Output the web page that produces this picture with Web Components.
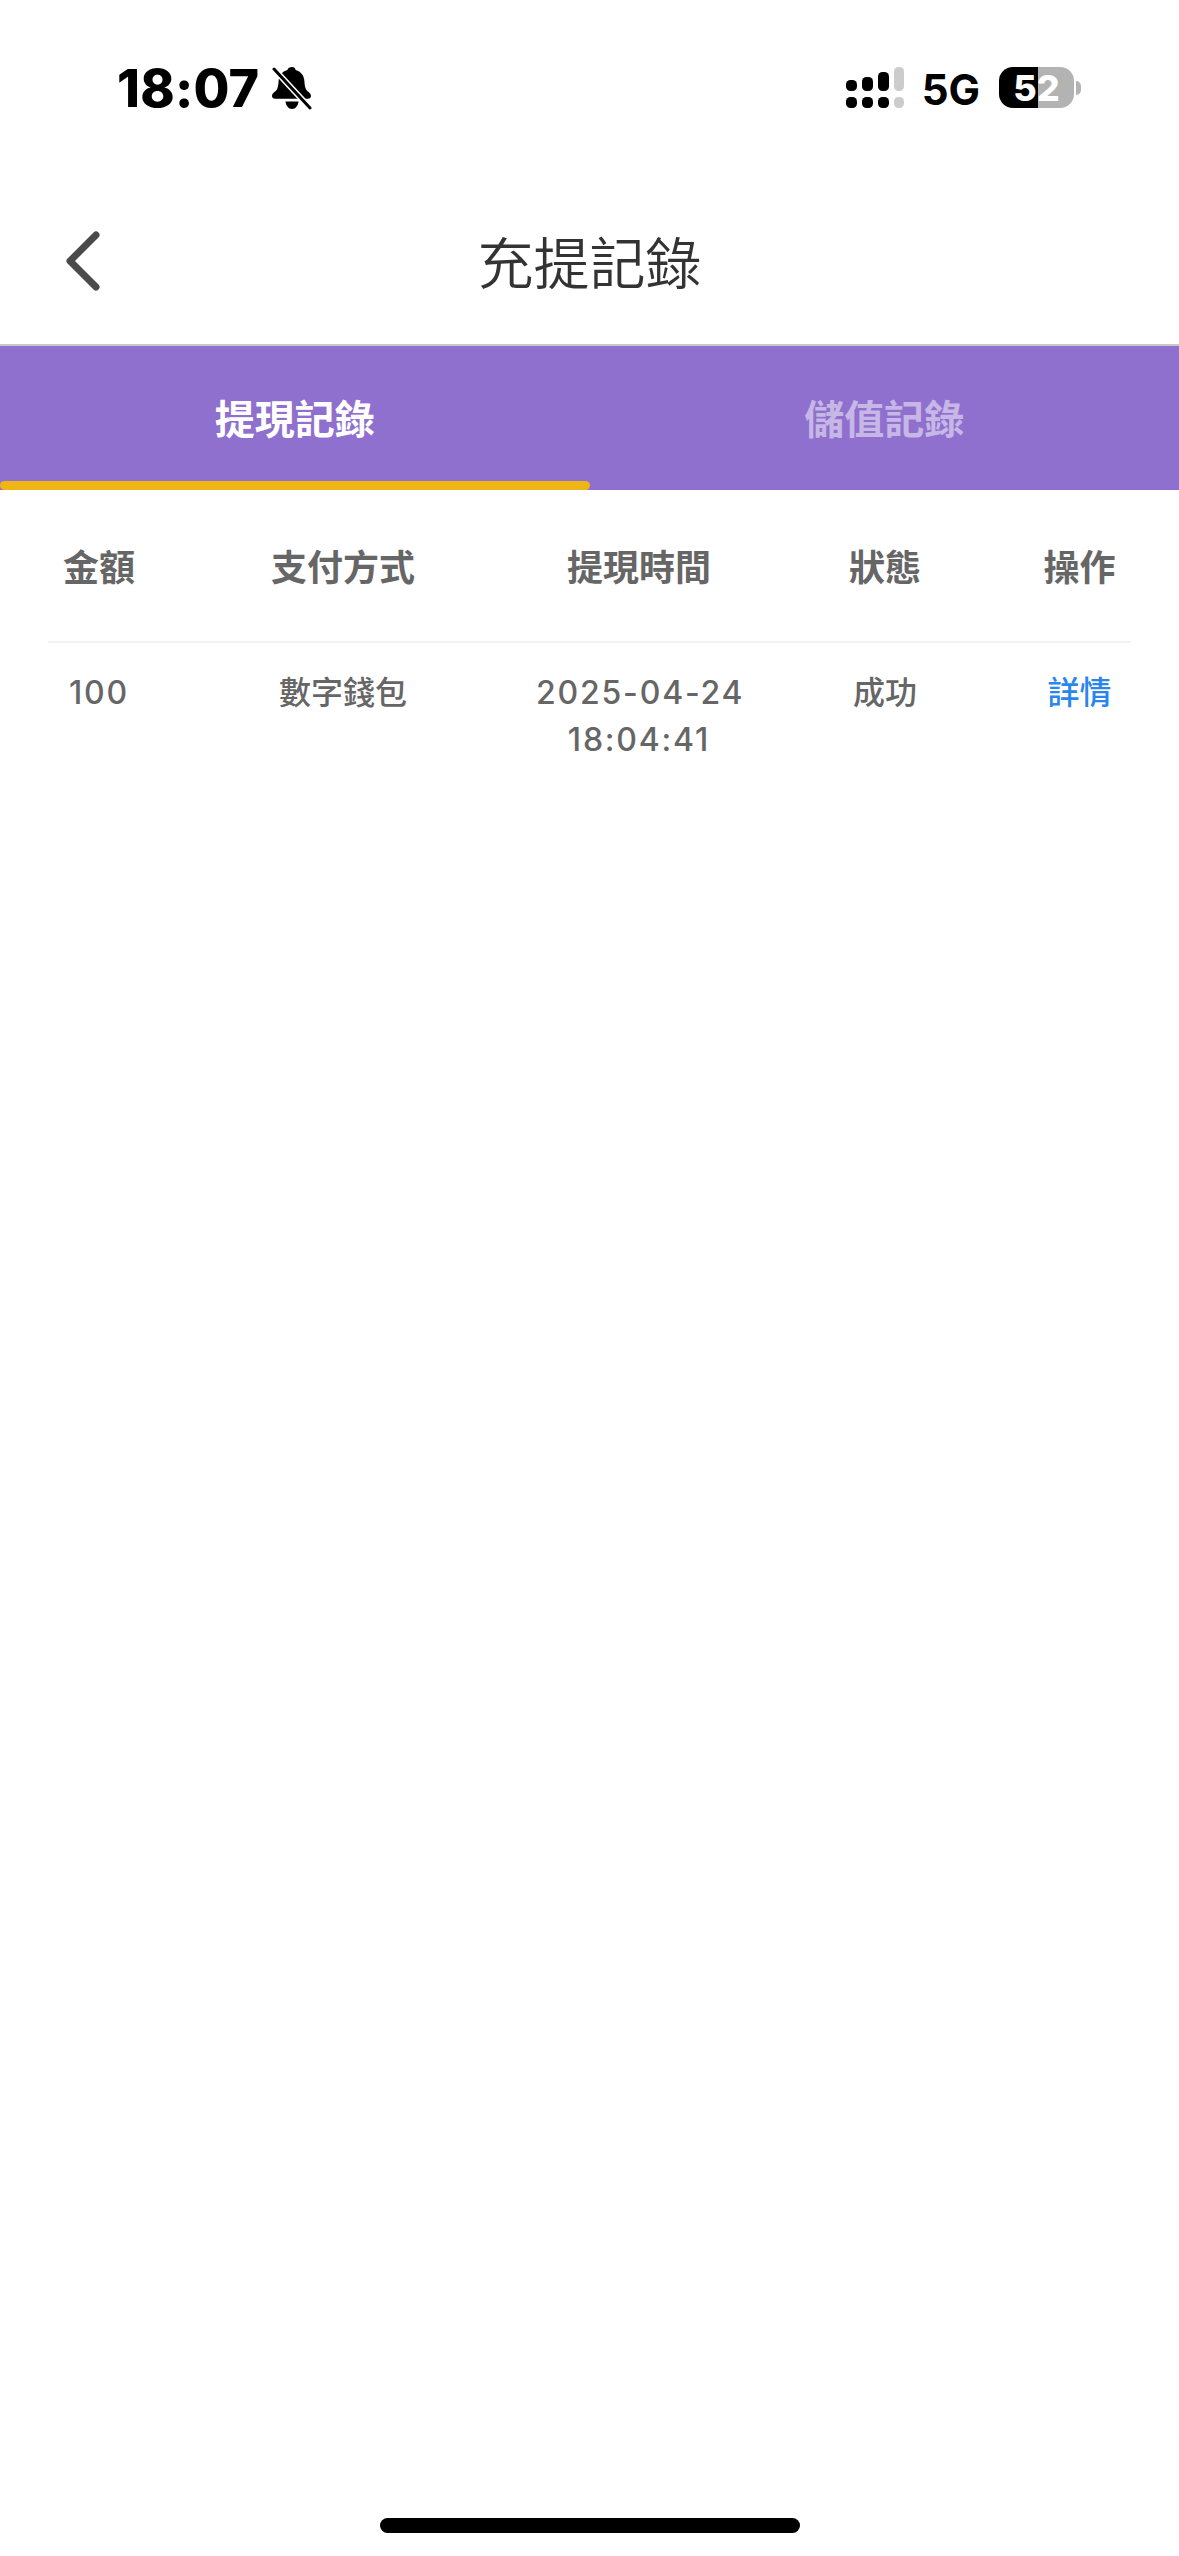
<!DOCTYPE html>
<html lang="zh-Hant">
<head>
<meta charset="utf-8">
<title>充提記錄</title>
<style>
    html, body {
        margin: 0;
        background: #fff;
    }

    body {
        display: flex;
        flex-direction: column;
        height: 2556px;
        overflow: hidden;
        font-family: Inter, "Noto Sans CJK TC", sans-serif;
    }
</style>
</head>
<body>
<status-bar time="18:07" network="5G" battery="52"></status-bar>
<nav-header>充提記錄</nav-header>
<record-tabs>
    <tab-item active>提現記錄</tab-item>
    <tab-item>儲值記錄</tab-item>
</record-tabs>
<record-table>
    <record-row head>
        <span>金額</span><span>支付方式</span><span>提現時間</span><span>狀態</span><span>操作</span>
    </record-row>
    <record-row>
        <span class="num">100</span><span>數字錢包</span><span class="num">2025-04-24<br>18:04:41</span><span>成功</span><a>詳情</a>
    </record-row>
</record-table>
<home-bar></home-bar>

<script>
class StatusBar extends HTMLElement {

    constructor() {
        super();
        this.shadowDOM = this.attachShadow({ mode: "open" });
    }

    connectedCallback() {
        this.render();
    }

    render() {
        const battery = this.getAttribute("battery");
        this.shadowDOM.innerHTML = `
            <style>
                :host {
                    display: flex;
                    align-items: center;
                    height: 176px;
                    padding: 1px 98px 0 117px;
                    box-sizing: border-box;
                    color: #000;
                    font-family: Inter, sans-serif;
                }

                .time {
                    font-size: 52px;
                    font-weight: 800;
                    letter-spacing: 0.2px;
                    line-height: 1;
                }

                .bell {
                    margin-left: 13px;
                }

                .right {
                    display: flex;
                    align-items: center;
                    margin: -2px 0 0 auto;
                }

                .network {
                    margin: 4px 19px 0 18px;
                    font-size: 42px;
                    font-weight: 700;
                    line-height: 1;
                }

                .battery {
                    display: flex;
                    align-items: center;
                }

                .cell {
                    display: flex;
                    align-items: center;
                    justify-content: center;
                    width: 75px;
                    height: 41px;
                    border-radius: 14px;
                    background: linear-gradient(to right, #000 52%, #b3b3b3 52%);
                    color: #fff;
                    font-size: 36px;
                    font-weight: 800;
                    line-height: 1;
                }

                .nub {
                    width: 5px;
                    height: 14px;
                    margin-left: 2px;
                    border-radius: 0 7px 7px 0;
                    background: #b3b3b3;
                }
            </style>

            <span class="time">${this.getAttribute("time")}</span>
            <svg class="bell" width="40" height="43" viewBox="0 0 40 43">
                <path d="M20 0c2 0 3.400 1.300 3.600 3 5.400 1.400 8.400 5.500 8.800 11 .2 3.700.6 6.700 1.900 8.800 1.200 1.900 4.700 3.400 4.700 6.200 0 1.600-1.200 2.800-3.200 2.800H3.200C1.200 31.800 0 30.600 0 29c0-2.800 3.500-4.300 4.700-6.200C6 20.700 6.400 17.700 6.600 14c.4-5.500 3.400-9.600 8.800-11C15.600 1.300 18 0 20 0z"/>
                <path d="M13.500 34.500h13c-.4 4.200-3 7.500-6.500 7.500s-6.100-3.300-6.500-7.500z"/>
                <path d="M2 2 38 41" stroke="#fff" stroke-width="6" fill="none"/>
                <path d="M2 2 38 41" stroke="#000" stroke-width="3" stroke-linecap="round" fill="none"/>
            </svg>
            <div class="right">
                <svg width="58" height="41" viewBox="0 0 58 41">
                    <rect x="0" y="13" width="11" height="11" rx="4.500"/>
                    <rect x="16" y="10" width="11" height="14" rx="4.500"/>
                    <rect x="32" y="5" width="11" height="19" rx="4.500"/>
                    <rect x="48" y="0" width="10" height="24" rx="4.500" fill="#cccccc"/>
                    <rect x="0" y="30" width="11" height="11" rx="4.500"/>
                    <rect x="16" y="30" width="11" height="11" rx="4.500"/>
                    <rect x="32" y="30" width="11" height="11" rx="4.500"/>
                    <rect x="48" y="30" width="10" height="11" rx="4.500" fill="#cccccc"/>
                </svg>
                <span class="network">${this.getAttribute("network")}</span>
                <div class="battery">
                    <div class="cell">${battery}</div>
                    <div class="nub"></div>
                </div>
            </div>
        `;
    }
}

class NavHeader extends HTMLElement {

    constructor() {
        super();
        this.shadowDOM = this.attachShadow({ mode: "open" });
    }

    connectedCallback() {
        this.shadowDOM.innerHTML = `
            <style>
                :host {
                    display: flex;
                    align-items: center;
                    justify-content: center;
                    position: relative;
                    height: 170px;
                    padding-bottom: 2px;
                    box-sizing: border-box;
                    border-bottom: 2px solid #c8c8c8;
                    color: #333;
                    font-family: "Noto Sans CJK TC", sans-serif;
                    font-size: 56px;
                    font-weight: 350;
                }

                svg {
                    position: absolute;
                    left: 62px;
                    top: 54px;
                }
            </style>

            <svg width="42" height="62" viewBox="0 0 42 62">
                <path d="M34 5 8 31l26 26" fill="none" stroke="#4a4a4a" stroke-width="7" stroke-linecap="round" stroke-linejoin="round"/>
            </svg>
            <slot></slot>
        `;
    }
}

class RecordTabs extends HTMLElement {

    constructor() {
        super();
        this.shadowDOM = this.attachShadow({ mode: "open" });
    }

    connectedCallback() {
        this.shadowDOM.innerHTML = `
            <style>
                :host {
                    display: flex;
                    height: 144px;
                    background: #8f70ce;
                }
            </style>

            <slot></slot>
        `;
    }
}

class TabItem extends HTMLElement {

    constructor() {
        super();
        this.shadowDOM = this.attachShadow({ mode: "open" });
    }

    connectedCallback() {
        this.shadowDOM.innerHTML = `
            <style>
                :host {
                    flex: 1;
                    display: flex;
                    align-items: center;
                    justify-content: center;
                    position: relative;
                    padding-bottom: 3px;
                    box-sizing: border-box;
                    color: rgba(255, 255, 255, 0.5);
                    font-family: "Noto Sans CJK TC", sans-serif;
                    font-size: 40px;
                    font-weight: 700;
                }

                :host([active]) {
                    color: #fff;
                }

                :host([active])::after {
                    content: "";
                    position: absolute;
                    left: 0;
                    right: 0;
                    bottom: 0;
                    height: 9px;
                    border-radius: 5px;
                    background: #eeb614;
                }
            </style>

            <slot></slot>
        `;
    }
}

class RecordTable extends HTMLElement {

    constructor() {
        super();
        this.shadowDOM = this.attachShadow({ mode: "open" });
    }

    connectedCallback() {
        this.shadowDOM.innerHTML = `
            <style>
                :host {
                    display: block;
                    padding: 0 48px;
                }
            </style>

            <slot></slot>
        `;
    }
}

class RecordRow extends HTMLElement {

    constructor() {
        super();
        this.shadowDOM = this.attachShadow({ mode: "open" });
    }

    connectedCallback() {
        this.shadowDOM.innerHTML = `
            <style>
                :host {
                    display: grid;
                    grid-template-columns: 102px 386px 206px 286px 103px;
                    box-sizing: border-box;
                    padding: 26px 0 19px;
                    color: #666;
                    font-family: Inter, "Noto Sans CJK TC", sans-serif;
                    font-size: 32px;
                    font-weight: 500;
                    line-height: 47px;
                    text-align: center;
                    white-space: nowrap;
                }

                :host([head]) {
                    height: 153px;
                    align-items: center;
                    padding: 5px 0 0;
                    border-bottom: 2px solid #f2f2f2;
                    font-size: 36px;
                    font-weight: 700;
                }

                ::slotted(.num) {
                    letter-spacing: 1.8px;
                }

                ::slotted(a) {
                    color: #2a85ec;
                }
            </style>

            <slot></slot>
        `;
    }
}

class HomeBar extends HTMLElement {

    constructor() {
        super();
        this.shadowDOM = this.attachShadow({ mode: "open" });
    }

    connectedCallback() {
        this.shadowDOM.innerHTML = `
            <style>
                :host {
                    display: block;
                    width: 420px;
                    height: 15px;
                    margin: auto auto 23px;
                    border-radius: 8px;
                    background: #000;
                }
            </style>
        `;
    }
}

customElements.define("status-bar", StatusBar);
customElements.define("nav-header", NavHeader);
customElements.define("record-tabs", RecordTabs);
customElements.define("tab-item", TabItem);
customElements.define("record-table", RecordTable);
customElements.define("record-row", RecordRow);
customElements.define("home-bar", HomeBar);
</script>
</body>
</html>
